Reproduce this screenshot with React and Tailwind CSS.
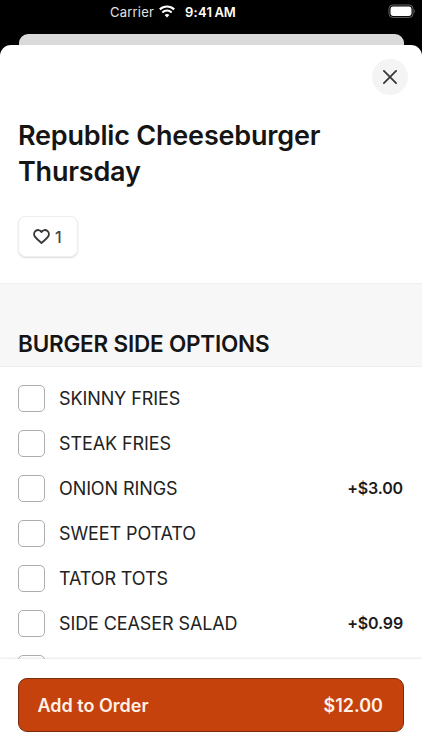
import React from "react";

const options = [
  { name: "SKINNY FRIES" },
  { name: "STEAK FRIES" },
  { name: "ONION RINGS", price: "+$3.00" },
  { name: "SWEET POTATO" },
  { name: "TATOR TOTS" },
  { name: "SIDE CEASER SALAD", price: "+$0.99" },
  { name: "" },
];

function StatusBar() {
  return (
    <header className="relative flex h-[34px] shrink-0 items-start pl-[110px] pt-[2px] text-[13px] leading-5 text-white">
      <span className="w-[45px] whitespace-nowrap tracking-[0.2px] text-[#e2e2e2]">Carrier</span>
      <svg className="ml-[4px] mt-[3px] h-[13px] w-[16px]" viewBox="0 0 16 13" fill="none" stroke="white">
        <path d="M.8 4.4a10.4 10.4 0 0 1 14.4 0" strokeWidth="2.2" />
        <path d="M3.3 7.4a6.8 6.8 0 0 1 9.4 0" strokeWidth="2.1" />
        <path d="M8 12.6 5.6 10.1a3.5 3.5 0 0 1 4.8 0Z" fill="white" stroke="none" />
      </svg>
      <span className="ml-[10px] flex gap-[2px] whitespace-nowrap font-semibold">
        <span className="tracking-[0.3px]">9:41</span>
        <span>AM</span>
      </span>
      <svg className="absolute left-[388px] top-[4px] h-[14px] w-[28px]" viewBox="0 0 28 14" fill="none">
        <rect x="1" y="1" width="24" height="12.4" rx="3.6" stroke="#666" />
        <rect x="2.5" y="2.5" width="21" height="9.4" rx="2.4" fill="white" />
        <path d="M26.3 5.2c1.1.4 1.1 3.4 0 3.8Z" fill="#666" />
      </svg>
    </header>
  );
}

function Option({ name, price }) {
  return (
    <li className="flex h-[45px] items-center">
      <span className="h-[27px] w-[27px] rounded-[5px] border border-[#adadad] bg-white" />
      <span className="ml-[14px] pt-[2px] text-[18px] leading-6 tracking-[-0.1px] text-[#222]">{name}</span>
      {price && <span className="ml-auto text-[16px] font-semibold tracking-[-0.15px] text-[#1c1c1c]">{price}</span>}
    </li>
  );
}

export default function App() {
  return (
    <div className="flex h-[750px] w-[422px] flex-col overflow-hidden bg-black font-['Inter',sans-serif]">
      <StatusBar />
      <div className="ml-[19px] mr-[18px] h-[11px] shrink-0 rounded-t-[9px] bg-[#dadada]" />
      <main className="flex min-h-0 flex-1 flex-col overflow-hidden rounded-t-[11px] bg-white">
        <div className="flex h-[73px] shrink-0 justify-end pr-[14px] pt-[14px]">
          <button className="flex h-9 w-9 items-center justify-center rounded-full bg-[#f4f4f4]" aria-label="Close">
            <svg className="h-[14px] w-[14px]" viewBox="0 0 14 14" stroke="#383838" strokeWidth="1.8" strokeLinecap="round">
              <path d="m.9.9 12.2 12.2M13.1.9.9 13.1" />
            </svg>
          </button>
        </div>
        <h1 className="h-[98px] shrink-0 pl-[18px] text-[27px] font-semibold leading-9 tracking-[-0.2px] text-[#151515]">
          Republic Cheeseburger
          <br />
          Thursday
        </h1>
        <button className="ml-[18px] flex h-[41px] w-[60px] shrink-0 items-center rounded-[8px] border border-[#eee] bg-white pl-[14px] shadow-[0_1px_2px_rgba(0,0,0,0.14)]">
          <svg className="h-[15px] w-[17px]" viewBox="0 0 17 15" fill="none" stroke="#383838" strokeWidth="1.9" strokeLinejoin="round">
            <path d="M8.5 3.1C7 .7 4.4.5 2.6 1.9.6 3.6.7 6.3 2.3 8.2c1.5 1.9 4 4 6.2 5.7 2.2-1.7 4.7-3.8 6.2-5.7 1.6-1.9 1.7-4.6-.3-6.3C12.6.5 10 .7 8.5 3.1Z" />
          </svg>
          <span className="ml-[5px] text-[16px] font-medium text-[#484848]">1</span>
        </button>
        <section className="mt-[26px] h-[84px] shrink-0 border-y border-[#efefef] bg-[#f7f7f7] pl-[18px] pt-[44px]">
          <h2 className="text-[22.5px] font-semibold leading-8 tracking-[-0.2px] text-[#151515]">BURGER SIDE OPTIONS</h2>
        </section>
        <ul className="min-h-0 flex-1 overflow-hidden pl-[18px] pr-[19px] pt-[8.5px]">
          {options.map((option, index) => (
            <Option key={index} {...option} />
          ))}
        </ul>
        <footer className="relative h-[91px] shrink-0 bg-white px-[18px] pt-[19px] shadow-[0_-1px_2px_rgba(0,0,0,0.09)]">
          <button className="flex h-[54px] w-full items-center justify-between rounded-[9px] border border-[#7b2c0c] bg-[#c5420c] pl-[18.5px] pr-[20px] text-[18px] font-semibold text-[#fff1e8]">
            <span>Add to Order</span>
            <span>$12.00</span>
          </button>
        </footer>
      </main>
    </div>
  );
}
